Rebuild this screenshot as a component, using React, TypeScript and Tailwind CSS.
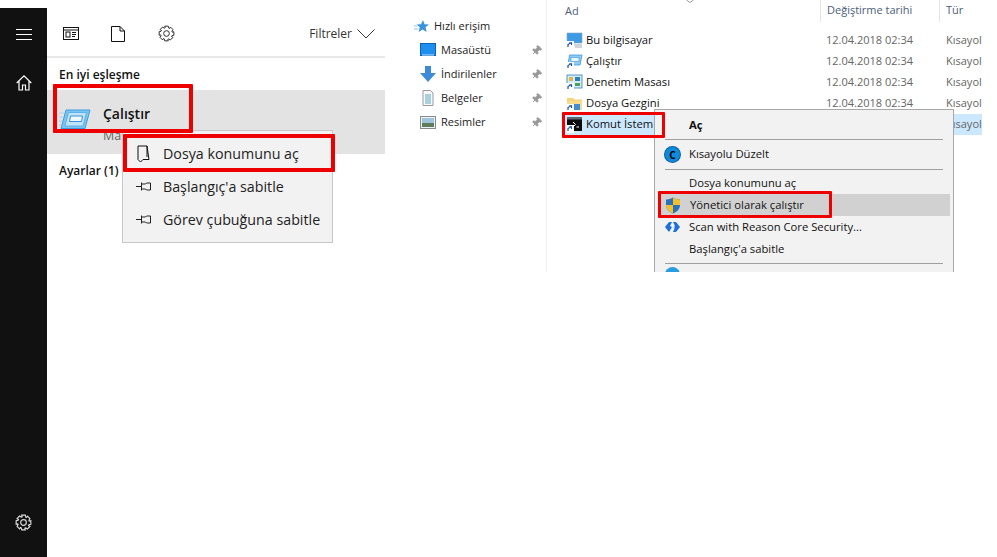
import { Pin } from 'lucide-react'

const files = ['Bu bilgisayar', 'Çalıştır', 'Denetim Masası', 'Dosya Gezgini', 'Komut İstem']

function Gear({ size, color, width = 1 }: { size: number; color: string; width?: number }) {
  const teeth = 8
  const pts: string[] = []
  for (let i = 0; i < teeth; i++) {
    const a = (i * 2 * Math.PI) / teeth
    const step = (2 * Math.PI) / teeth
    for (const [off, r] of [[-0.3, 8], [0.3, 8], [0.5, 6.2], [0.7 + 0.0, 6.2]] as const) {
      const t = a + off * step
      pts.push(`${(9 + r * Math.sin(t)).toFixed(2)},${(9 - r * Math.cos(t)).toFixed(2)}`)
    }
  }
  return (
    <svg width={size} height={size} viewBox="0 0 18 18" className="shrink-0">
      <polygon points={pts.join(' ')} fill="none" stroke={color} strokeWidth={width} />
      <circle cx="9" cy="9" r="3" fill="none" stroke={color} strokeWidth={width} />
    </svg>
  )
}

function Shortcut() {
  return (
    <g>
      <rect x="0" y="9" width="8" height="8" fill="#fff" />
      <path d="M2 15 L2 12.5 L4.5 11 M3.2 10.8 L5.5 10.8 L5.5 13" stroke="#1f4f9c" strokeWidth="1.2" fill="none" />
    </g>
  )
}

function FileIcon({ index }: { index: number }) {
  return (
    <svg width="17" height="17" viewBox="0 0 17 17" className="shrink-0">
      {index === 0 && (
        <g>
          <rect x="1" y="1" width="15" height="10" fill="#3f9ae6" stroke="#7fa8c8" strokeWidth="0.6" />
          <path d="M6 13 H16 M9 15 H16" stroke="#9aa8b4" strokeWidth="1" />
        </g>
      )}
      {index === 1 && (
        <g>
          <path d="M3.5 2 H16 L14 12 H2 Z" fill="#8fcdf3" stroke="#3c97dc" strokeWidth="0.8" />
          <rect x="5" y="4.5" width="8" height="4" fill="#eaf6fd" stroke="#3c97dc" strokeWidth="0.6" />
        </g>
      )}
      {index === 2 && (
        <g>
          <rect x="1" y="1" width="15" height="13" fill="#d5ecf9" stroke="#2f7fb8" strokeWidth="0.8" />
          <rect x="3" y="3" width="4" height="4" fill="#e3b544" />
          <rect x="9" y="3" width="5" height="4" fill="#2f7fb8" />
          <rect x="9" y="9" width="5" height="3" fill="#4fa05a" />
        </g>
      )}
      {index === 3 && (
        <g>
          <path d="M1 3 H7 L8.5 4.5 H16 V15 H1 Z" fill="#f4d37a" />
          <rect x="1" y="6" width="15" height="9" fill="#f7dc8f" />
          <rect x="8" y="9" width="6" height="6" fill="#3f8fd0" />
        </g>
      )}
      {index === 4 && (
        <g>
          <rect x="1" y="1" width="15" height="14" fill="#0c0c0c" />
          <rect x="1" y="1" width="15" height="2.5" fill="#5c6670" />
          <path d="M7 6 L9.5 8.5 L7 11 M10.5 11 H13" stroke="#fff" strokeWidth="1" fill="none" />
        </g>
      )}
      <Shortcut />
    </svg>
  )
}

function NavIcon({ name }: { name: string }) {
  if (name === 'Masaüstü') {
    return (
      <svg width="16" height="14" viewBox="0 0 16 14">
        <rect x="0.5" y="0.5" width="15" height="12" fill="#1e8fee" stroke="#0f63b4" />
        <rect x="2" y="11.5" width="12" height="1" fill="#bfe2fb" />
      </svg>
    )
  }
  if (name === 'İndirilenler') {
    return (
      <svg width="16" height="16" viewBox="0 0 16 16">
        <path d="M5 0 H11 V7 H16 L8 16 L0 7 H5 Z" fill="#3d8bd8" />
      </svg>
    )
  }
  if (name === 'Belgeler') {
    return (
      <svg width="16" height="16" viewBox="0 0 16 16">
        <path d="M3 0.5 H10.5 L13 3 V15.5 H3 Z" fill="#f8f8f8" stroke="#9a9a9a" />
        <path d="M5 5 H11 M5 7 H11 M5 9 H11 M5 11 H11 M5 13 H11" stroke="#4a9fc0" strokeWidth="0.9" />
      </svg>
    )
  }
  return (
    <svg width="16" height="13" viewBox="0 0 16 13">
      <rect x="0.5" y="0.5" width="15" height="12" fill="#eef2f4" stroke="#8a8a8a" />
      <rect x="2" y="2" width="12" height="5" fill="#9fc4dc" />
      <rect x="2" y="7" width="12" height="4" fill="#5f7d5c" />
    </svg>
  )
}

function StarIcon() {
  return (
    <svg width="15" height="13" viewBox="0 0 15 13" className="shrink-0">
      <path d="M9 0 L10.5 4.2 L15 4.4 L11.5 7.2 L12.7 12 L8.6 9.4 L4.6 12 L5.8 7.2 L2.5 4.4 L7 4.2 Z" fill="#3a93dd" />
      <path d="M0 6 H3 M0 9 H4" stroke="#8fc4ec" strokeWidth="1" />
    </svg>
  )
}

function PinSmall() {
  return (
    <svg width="15" height="11" viewBox="0 0 15 11" className="shrink-0">
      <path d="M0 5.5 H5.5 M5.5 1.5 V9.5 M5.5 3 H9.5 L10.5 2 H14.5 V9 H10.5 L9.5 8 H5.5" fill="none" stroke="#222" strokeWidth="1" />
    </svg>
  )
}

function RunIcon() {
  return (
    <svg width="32" height="20" viewBox="0 0 32 20" className="mt-[4px] shrink-0">
      <path d="M0 4 H5 M0 8 H4 M0 12 H3 M0 16 H2" stroke="#a9d6f5" strokeWidth="1" />
      <path d="M7 1 H31 L26 19.5 H2 Z" fill="#7cc4f0" stroke="#3b9de0" strokeWidth="1" />
      <path d="M9.5 3.5 H27.5 L24 17 H6 Z" fill="#bfe3f8" stroke="#4eaae6" strokeWidth="0.8" />
      <path d="M11.5 7 H23.5 L22.5 12.5 H10.5 Z" fill="#eef8fe" stroke="#3b8fce" strokeWidth="1" />
    </svg>
  )
}

function Shield() {
  return (
    <svg width="16" height="17" viewBox="0 0 16 17" className="shrink-0">
      <path d="M8 0.5 C10.5 2 13 2.5 15 2.5 V8 C15 12 12 15 8 16.5 C4 15 1 12 1 8 V2.5 C3 2.5 5.5 2 8 0.5 Z" fill="#2d6fb8" />
      <path d="M8 0.5 C10.5 2 13 2.5 15 2.5 V8 H8 Z" fill="#f0c02f" />
      <path d="M8 8 H1 C1 12 4 15 8 16.5 Z" fill="#f0c02f" />
    </svg>
  )
}

function RedBox({ className }: { className: string }) {
  return <div className={`absolute rounded-[1px] border-[#ee0000] ${className}`} />
}

export default function App() {
  return (
    <div
      className="relative flex h-[557px] w-[997px] overflow-hidden bg-white text-[#111]"
      style={{ fontFamily: '"Open Sans", "Noto Sans", sans-serif' }}
    >
      <aside className="mt-2 flex w-[47px] shrink-0 flex-col items-center justify-between bg-[#111] pb-[26px] pt-[21px] text-white">
        <div className="flex flex-col items-center gap-[35px]">
          <svg width="16" height="11" viewBox="0 0 16 11">
            <path d="M0 0.5 H16 M0 5.5 H16 M0 10.5 H16" stroke="#fff" strokeWidth="1" />
          </svg>
          <svg width="16" height="16" viewBox="0 0 16 16">
            <path d="M0.7 8 L8 0.9 L15.3 8 M3 6 V15 H6.5 V10 H9.5 V15 H13 V6" fill="none" stroke="#fff" strokeWidth="1.2" />
          </svg>
        </div>
        <Gear size={17} color="#ddd" width={1.2} />
      </aside>

      <section className="relative mt-2 w-[338px] shrink-0">
        <div className="flex h-[50px] items-center border-b-2 border-[#e8e8e8] pl-[16px] pr-[10px] pt-[3px]">
          <svg width="16" height="14" viewBox="0 0 16 14" className="mr-[32px] shrink-0">
            <rect x="0.5" y="0.5" width="15" height="12" fill="none" stroke="#111" />
            <path d="M0.5 3 H15.5" stroke="#111" />
            <rect x="3" y="5" width="4" height="5" fill="none" stroke="#111" />
            <path d="M9 5.5 H13 M9 7.5 H13 M9 9.5 H12" stroke="#111" />
          </svg>
          <svg width="14" height="16" viewBox="0 0 14 16" className="mr-[33px] shrink-0">
            <path d="M0.5 0.5 H9 L13.5 5 V15.5 H0.5 Z M9 0.5 V5 H13.5" fill="none" stroke="#111" />
          </svg>
          <Gear size={17} color="#222" />
          <span className="ml-auto text-[12px] text-[#333]">Filtreler</span>
          <svg width="18" height="10" viewBox="0 0 18 10" className="ml-[5px] shrink-0">
            <path d="M0.5 0.5 L9 9 L17.5 0.5" fill="none" stroke="#333" />
          </svg>
        </div>
        <p className="mt-[8px] pl-3 text-[12px] font-semibold leading-[17px]">En iyi eşleşme</p>
        <div className="mt-[7px] flex h-[64px] items-start gap-[12px] bg-[#e3e3e3] pl-[12px] pt-[15px]">
          <RunIcon />
          <div>
            <p className="text-[14px] font-semibold leading-[17px]">Çalıştır</p>
            <p className="mt-[7px] text-[12.5px] leading-[14px] text-[#666]">Masaüstü uygulaması</p>
          </div>
        </div>
        <p className="mt-[8px] pl-3 text-[12px] font-semibold leading-[17px]">Ayarlar (1)</p>

        <div className="absolute left-[75px] top-[122px] flex h-[113px] w-[211px] flex-col border border-[#c8c8c8] bg-[#f2f2f2] pl-[13px] pt-[6px] text-[14.25px] text-[#222]">
          <div className="flex h-[33px] items-center gap-[12px]">
            <svg width="15" height="18" viewBox="0 0 15 18" className="shrink-0">
              <path d="M2 1 H11 L13 14.5 H7 L4.5 17 L2 14.5 Z M11 1 V12" fill="none" stroke="#111" strokeWidth="1" />
            </svg>
            <span>Dosya konumunu aç</span>
          </div>
          <div className="flex h-[33px] items-center gap-[12px]">
            <PinSmall />
            <span>Başlangıç'a sabitle</span>
          </div>
          <div className="flex h-[33px] items-center gap-[12px]">
            <PinSmall />
            <span>Görev çubuğuna sabitle</span>
          </div>
        </div>
      </section>

      <section className="relative ml-[15px] flex h-[272px] w-[582px] shrink-0 overflow-hidden text-[11px]">
        <nav className="w-[147px] shrink-0 border-r border-[#f0f0f0] pt-[17px] text-[#222]">
          <div className="flex h-[18px] items-center gap-[5px] pl-[14px]">
            <StarIcon />
            <span>Hızlı erişim</span>
          </div>
          {['Masaüstü', 'İndirilenler', 'Belgeler', 'Resimler'].map((name) => (
            <div key={name} className="mt-[6px] flex h-[18px] items-center pl-[20px] pr-[4px]">
              <div className="flex w-[21px] shrink-0 justify-start">
                <NavIcon name={name} />
              </div>
              <span>{name}</span>
              <Pin size={11} className="ml-auto rotate-45 fill-[#999] text-[#999]" />
            </div>
          ))}
        </nav>

        <div className="ml-[16px] w-[419px] shrink-0">
          <div className="flex h-[22px] items-center text-[#4c607a]">
            <span className="w-[257px] pl-[2px]">Ad</span>
            <span className="h-full w-[119px] border-l border-[#e5e5e5] pl-[6px] leading-[20px]">Değiştirme tarihi</span>
            <span className="h-full flex-1 border-l border-[#e5e5e5] pl-[6px] leading-[20px]">Tür</span>
          </div>
          <div className="mt-[8px]">
            {files.map((name, i) => (
              <div key={name} className={`flex h-[21px] items-center ${i === 4 ? 'bg-[#cce8ff]' : ''}`}>
                <div className="flex w-[263px] shrink-0 items-center gap-[3px] pl-[3px]">
                  <FileIcon index={i} />
                  <span className="text-[11.25px] text-[#111]">{name}</span>
                </div>
                <span className="w-[120px] shrink-0 text-[#666]">12.04.2018 02:34</span>
                <span className="text-[#666]">Kısayol</span>
              </div>
            ))}
          </div>
        </div>

        <svg width="8" height="3" viewBox="0 0 8 3" className="absolute left-[286px] top-0">
          <path d="M0.5 0 L4 2.5 L7.5 0" fill="none" stroke="#999" />
        </svg>

        <div className="absolute left-[254px] top-[109px] h-[170px] w-[300px] border border-[#a8a8a8] bg-[#f2f2f2] pt-[4px] text-[11.25px] text-[#111]">
          <div className="flex h-[22px] items-center pl-[34px] font-bold">Aç</div>
          <div className="mx-[10px] my-[3px] h-px bg-[#a0a0a0]" />
          <div className="flex h-[23px] items-center gap-[9px] pl-[10px]">
            <span className="flex h-[15px] w-[15px] items-center justify-center rounded-full bg-[#1089d8] text-[10px] font-bold leading-none text-black ring-1 ring-[#0a5fa0]">
              C
            </span>
            <span>Kısayolu Düzelt</span>
          </div>
          <div className="mx-[10px] my-[3px] h-px bg-[#a0a0a0]" />
          <div className="flex h-[21px] items-center pl-[34px]">Dosya konumunu aç</div>
          <div className="mx-[3px] flex h-[22px] items-center gap-[9px] bg-[#d1d1d1] pl-[7px]">
            <Shield />
            <span>Yönetici olarak çalıştır</span>
          </div>
          <div className="flex h-[22px] items-center gap-[9px] pl-[10px]">
            <svg width="15" height="12" viewBox="0 0 15 12" className="shrink-0">
              <path d="M0 6 L4 1 H7 L5 5 L7 6 L4 11 Z" fill="#1d6fe0" />
              <path d="M15 6 L11 1 H8 L10 5 L8 7 L10 6 L8 11 H11 Z" fill="#1d6fe0" />
            </svg>
            <span>Scan with Reason Core Security...</span>
          </div>
          <div className="flex h-[22px] items-center pl-[34px]">Başlangıç'a sabitle</div>
          <div className="mx-[10px] my-[3px] h-px bg-[#a0a0a0]" />
          <div className="ml-[10px] h-[15px] w-[15px] rounded-full bg-[#2a9de0]" />
        </div>
      </section>

      <RedBox className="left-[53px] top-[84px] h-[49px] w-[140px] border-4" />
      <RedBox className="left-[123px] top-[134px] h-[38px] w-[212px] border-4" />
      <RedBox className="left-[562px] top-[112px] h-[26px] w-[103px] border-[3px]" />
      <RedBox className="left-[658px] top-[191px] h-[27px] w-[174px] border-[3px]" />
    </div>
  )
}
